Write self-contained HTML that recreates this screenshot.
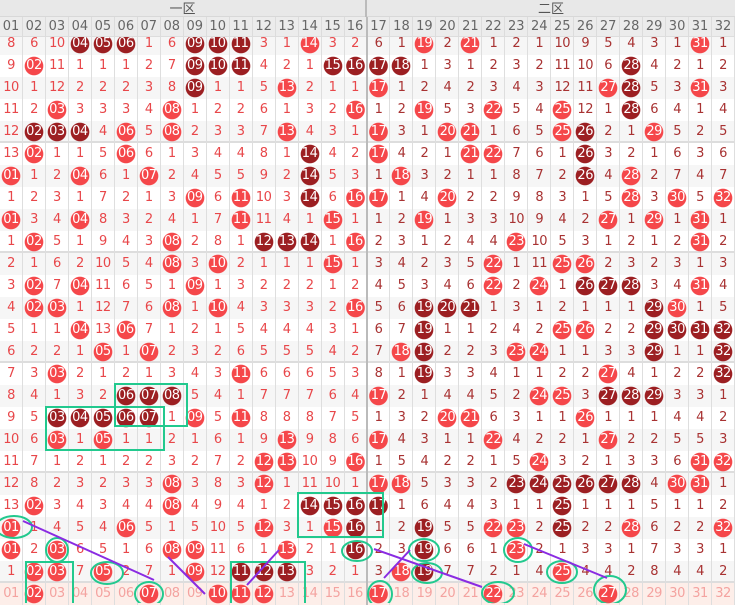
<!DOCTYPE html><html><head><meta charset="utf-8"><style>
*{margin:0;padding:0;box-sizing:border-box}
body{width:735px;height:603px;overflow:hidden;background:#fff;font-family:"DejaVu Sans","Liberation Sans",sans-serif;position:relative}
.h0{position:absolute;top:0;left:0;width:735px;height:17px;background:#e8e8e8;border-bottom:1px solid #d8d8d8;display:grid;grid-template-columns:367px 368px;font-family:"Liberation Sans","Noto Sans CJK SC",sans-serif;font-size:13px;color:#555;z-index:3}
.h0 div{text-align:center;line-height:17px}
.h0 div:first-child{border-right:2px solid #bbb}
.h1{position:absolute;top:17px;left:0;width:735px;height:20px;background:#ececec;z-index:3;display:grid;grid-template-columns:repeat(32,1fr);font-size:13px;color:#666;border-bottom:1px solid #ddd}
.h1 span{text-align:center;line-height:20px;border-right:1px solid #dcdcdc}
.h1 span:nth-child(16){border-right:2px solid #bbb}
.rows{position:absolute;top:33px;left:0;width:735px}
.r{display:grid;grid-template-columns:repeat(32,1fr);height:22px;font-size:13px}
.r:nth-child(odd){background:#f6f6f6}
.r:nth-child(5n){border-bottom:2px solid #ddd;height:22px}
.r>*{font-style:normal;font-weight:normal;text-decoration:none;text-align:center;line-height:22px;border-right:1px solid #dedede;color:#e8474a;letter-spacing:-0.5px}
.r>*:nth-child(16){border-right:2px solid #bbb}
.r>*:nth-child(n+17){color:#a83232}
.r>b{color:#fff!important;background:radial-gradient(circle at 50% 50%,#f5474a 9px,transparent 9.6px)}
.r>u{color:#fff!important;background:radial-gradient(circle at 50% 50%,#9c1f22 9px,transparent 9.6px)}
.r.f{background:#fdeee9}
.r.f>i{color:#f4a3a0}
svg{position:absolute;left:0;top:0;z-index:4}
</style></head><body>
<div class="h0"><div>一区</div><div>二区</div></div>
<div class="h1"><span>01</span><span>02</span><span>03</span><span>04</span><span>05</span><span>06</span><span>07</span><span>08</span><span>09</span><span>10</span><span>11</span><span>12</span><span>13</span><span>14</span><span>15</span><span>16</span><span>17</span><span>18</span><span>19</span><span>20</span><span>21</span><span>22</span><span>23</span><span>24</span><span>25</span><span>26</span><span>27</span><span>28</span><span>29</span><span>30</span><span>31</span><span>32</span></div>
<div class="rows">
<div class="r"><i>8</i><i>6</i><i>10</i><u>04</u><u>05</u><u>06</u><i>1</i><i>6</i><u>09</u><u>10</u><u>11</u><i>3</i><i>1</i><b>14</b><i>3</i><i>2</i><i>6</i><i>1</i><b>19</b><i>2</i><b>21</b><i>1</i><i>2</i><i>1</i><i>10</i><i>9</i><i>5</i><i>4</i><i>3</i><i>1</i><b>31</b><i>1</i></div>
<div class="r"><i>9</i><b>02</b><i>11</i><i>1</i><i>1</i><i>1</i><i>2</i><i>7</i><u>09</u><u>10</u><u>11</u><i>4</i><i>2</i><i>1</i><u>15</u><u>16</u><u>17</u><u>18</u><i>1</i><i>3</i><i>1</i><i>2</i><i>3</i><i>2</i><i>11</i><i>10</i><i>6</i><u>28</u><i>4</i><i>2</i><i>1</i><i>2</i></div>
<div class="r"><i>10</i><i>1</i><i>12</i><i>2</i><i>2</i><i>2</i><i>3</i><i>8</i><u>09</u><i>1</i><i>1</i><i>5</i><b>13</b><i>2</i><i>1</i><i>1</i><b>17</b><i>1</i><i>2</i><i>4</i><i>2</i><i>3</i><i>4</i><i>3</i><i>12</i><i>11</i><b>27</b><u>28</u><i>5</i><i>3</i><b>31</b><i>3</i></div>
<div class="r"><i>11</i><i>2</i><b>03</b><i>3</i><i>3</i><i>3</i><i>4</i><b>08</b><i>1</i><i>2</i><i>2</i><i>6</i><i>1</i><i>3</i><i>2</i><b>16</b><i>1</i><i>2</i><b>19</b><i>5</i><i>3</i><b>22</b><i>5</i><i>4</i><b>25</b><i>12</i><i>1</i><u>28</u><i>6</i><i>4</i><i>1</i><i>4</i></div>
<div class="r"><i>12</i><u>02</u><u>03</u><u>04</u><i>4</i><b>06</b><i>5</i><b>08</b><i>2</i><i>3</i><i>3</i><i>7</i><b>13</b><i>4</i><i>3</i><i>1</i><b>17</b><i>3</i><i>1</i><b>20</b><b>21</b><i>1</i><i>6</i><i>5</i><b>25</b><u>26</u><i>2</i><i>1</i><b>29</b><i>5</i><i>2</i><i>5</i></div>
<div class="r"><i>13</i><b>02</b><i>1</i><i>1</i><i>5</i><b>06</b><i>6</i><i>1</i><i>3</i><i>4</i><i>4</i><i>8</i><i>1</i><u>14</u><i>4</i><i>2</i><b>17</b><i>4</i><i>2</i><i>1</i><b>21</b><b>22</b><i>7</i><i>6</i><i>1</i><u>26</u><i>3</i><i>2</i><i>1</i><i>6</i><i>3</i><i>6</i></div>
<div class="r"><b>01</b><i>1</i><i>2</i><b>04</b><i>6</i><i>1</i><b>07</b><i>2</i><i>4</i><i>5</i><i>5</i><i>9</i><i>2</i><u>14</u><i>5</i><i>3</i><i>1</i><b>18</b><i>3</i><i>2</i><i>1</i><i>1</i><i>8</i><i>7</i><i>2</i><u>26</u><i>4</i><b>28</b><i>2</i><i>7</i><i>4</i><i>7</i></div>
<div class="r"><i>1</i><i>2</i><i>3</i><i>1</i><i>7</i><i>2</i><i>1</i><i>3</i><b>09</b><i>6</i><b>11</b><i>10</i><i>3</i><u>14</u><i>6</i><b>16</b><b>17</b><i>1</i><i>4</i><b>20</b><i>2</i><i>2</i><i>9</i><i>8</i><i>3</i><i>1</i><i>5</i><b>28</b><i>3</i><b>30</b><i>5</i><b>32</b></div>
<div class="r"><b>01</b><i>3</i><i>4</i><b>04</b><i>8</i><i>3</i><i>2</i><i>4</i><i>1</i><i>7</i><b>11</b><i>11</i><i>4</i><i>1</i><b>15</b><i>1</i><i>1</i><i>2</i><b>19</b><i>1</i><i>3</i><i>3</i><i>10</i><i>9</i><i>4</i><i>2</i><b>27</b><i>1</i><b>29</b><i>1</i><b>31</b><i>1</i></div>
<div class="r"><i>1</i><b>02</b><i>5</i><i>1</i><i>9</i><i>4</i><i>3</i><b>08</b><i>2</i><i>8</i><i>1</i><u>12</u><u>13</u><u>14</u><i>1</i><b>16</b><i>2</i><i>3</i><i>1</i><i>2</i><i>4</i><i>4</i><b>23</b><i>10</i><i>5</i><i>3</i><i>1</i><i>2</i><i>1</i><i>2</i><b>31</b><i>2</i></div>
<div class="r"><i>2</i><i>1</i><i>6</i><i>2</i><i>10</i><i>5</i><i>4</i><b>08</b><i>3</i><b>10</b><i>2</i><i>1</i><i>1</i><i>1</i><b>15</b><i>1</i><i>3</i><i>4</i><i>2</i><i>3</i><i>5</i><b>22</b><i>1</i><i>11</i><b>25</b><b>26</b><i>2</i><i>3</i><i>2</i><i>3</i><i>1</i><i>3</i></div>
<div class="r"><i>3</i><b>02</b><i>7</i><b>04</b><i>11</i><i>6</i><i>5</i><i>1</i><b>09</b><i>1</i><i>3</i><i>2</i><i>2</i><i>2</i><i>1</i><i>2</i><i>4</i><i>5</i><i>3</i><i>4</i><i>6</i><b>22</b><i>2</i><b>24</b><i>1</i><u>26</u><u>27</u><u>28</u><i>3</i><i>4</i><b>31</b><i>4</i></div>
<div class="r"><i>4</i><b>02</b><b>03</b><i>1</i><i>12</i><i>7</i><i>6</i><b>08</b><i>1</i><b>10</b><i>4</i><i>3</i><i>3</i><i>3</i><i>2</i><b>16</b><i>5</i><i>6</i><u>19</u><u>20</u><u>21</u><i>1</i><i>3</i><i>1</i><i>2</i><i>1</i><i>1</i><i>1</i><u>29</u><b>30</b><i>1</i><i>5</i></div>
<div class="r"><i>5</i><i>1</i><i>1</i><b>04</b><i>13</i><b>06</b><i>7</i><i>1</i><i>2</i><i>1</i><i>5</i><i>4</i><i>4</i><i>4</i><i>3</i><i>1</i><i>6</i><i>7</i><u>19</u><i>1</i><i>1</i><i>2</i><i>4</i><i>2</i><b>25</b><b>26</b><i>2</i><i>2</i><u>29</u><u>30</u><u>31</u><u>32</u></div>
<div class="r"><i>6</i><i>2</i><i>2</i><i>1</i><b>05</b><i>1</i><b>07</b><i>2</i><i>3</i><i>2</i><i>6</i><i>5</i><i>5</i><i>5</i><i>4</i><i>2</i><i>7</i><b>18</b><u>19</u><i>2</i><i>2</i><i>3</i><b>23</b><b>24</b><i>1</i><i>1</i><i>3</i><i>3</i><u>29</u><i>1</i><i>1</i><u>32</u></div>
<div class="r"><i>7</i><i>3</i><b>03</b><i>2</i><i>1</i><i>2</i><i>1</i><i>3</i><i>4</i><i>3</i><b>11</b><i>6</i><i>6</i><i>6</i><i>5</i><i>3</i><i>8</i><i>1</i><u>19</u><i>3</i><i>3</i><i>4</i><i>1</i><i>1</i><i>2</i><i>2</i><b>27</b><i>4</i><i>1</i><i>2</i><i>2</i><u>32</u></div>
<div class="r"><i>8</i><i>4</i><i>1</i><i>3</i><i>2</i><u>06</u><u>07</u><u>08</u><i>5</i><i>4</i><i>1</i><i>7</i><i>7</i><i>7</i><i>6</i><i>4</i><b>17</b><i>2</i><i>1</i><i>4</i><i>4</i><i>5</i><i>2</i><b>24</b><b>25</b><i>3</i><u>27</u><u>28</u><u>29</u><i>3</i><i>3</i><i>1</i></div>
<div class="r"><i>9</i><i>5</i><u>03</u><u>04</u><u>05</u><u>06</u><u>07</u><i>1</i><b>09</b><i>5</i><b>11</b><i>8</i><i>8</i><i>8</i><i>7</i><i>5</i><i>1</i><i>3</i><i>2</i><b>20</b><b>21</b><i>6</i><i>3</i><i>1</i><i>1</i><b>26</b><i>1</i><i>1</i><i>1</i><i>4</i><i>4</i><i>2</i></div>
<div class="r"><i>10</i><i>6</i><b>03</b><i>1</i><b>05</b><i>1</i><i>1</i><i>2</i><i>1</i><i>6</i><i>1</i><i>9</i><b>13</b><i>9</i><i>8</i><i>6</i><b>17</b><i>4</i><i>3</i><i>1</i><i>1</i><b>22</b><i>4</i><i>2</i><i>2</i><i>1</i><b>27</b><i>2</i><i>2</i><i>5</i><i>5</i><i>3</i></div>
<div class="r"><i>11</i><i>7</i><i>1</i><i>2</i><i>1</i><i>2</i><i>2</i><i>3</i><i>2</i><i>7</i><i>2</i><b>12</b><b>13</b><i>10</i><i>9</i><b>16</b><i>1</i><i>5</i><i>4</i><i>2</i><i>2</i><i>1</i><i>5</i><b>24</b><i>3</i><i>2</i><i>1</i><i>3</i><i>3</i><i>6</i><b>31</b><b>32</b></div>
<div class="r"><i>12</i><i>8</i><i>2</i><i>3</i><i>2</i><i>3</i><i>3</i><b>08</b><i>3</i><i>8</i><i>3</i><b>12</b><i>1</i><i>11</i><i>10</i><i>1</i><b>17</b><b>18</b><i>5</i><i>3</i><i>3</i><i>2</i><u>23</u><u>24</u><u>25</u><u>26</u><u>27</u><u>28</u><i>4</i><b>30</b><b>31</b><i>1</i></div>
<div class="r"><i>13</i><b>02</b><i>3</i><i>4</i><i>3</i><i>4</i><i>4</i><b>08</b><i>4</i><i>9</i><i>4</i><i>1</i><i>2</i><u>14</u><u>15</u><u>16</u><u>17</u><i>1</i><i>6</i><i>4</i><i>4</i><i>3</i><i>1</i><i>1</i><u>25</u><i>1</i><i>1</i><i>1</i><i>5</i><i>1</i><i>1</i><i>2</i></div>
<div class="r"><b>01</b><i>1</i><i>4</i><i>5</i><i>4</i><b>06</b><i>5</i><i>1</i><i>5</i><i>10</i><i>5</i><b>12</b><i>3</i><i>1</i><b>15</b><u>16</u><i>1</i><i>2</i><u>19</u><i>5</i><i>5</i><b>22</b><b>23</b><i>2</i><u>25</u><i>2</i><i>2</i><b>28</b><i>6</i><i>2</i><i>2</i><b>32</b></div>
<div class="r"><b>01</b><i>2</i><b>03</b><i>6</i><i>5</i><i>1</i><i>6</i><b>08</b><b>09</b><i>11</i><i>6</i><i>1</i><b>13</b><i>2</i><i>1</i><u>16</u><i>2</i><i>3</i><u>19</u><i>6</i><i>6</i><i>1</i><b>23</b><i>2</i><i>1</i><i>3</i><i>3</i><i>1</i><i>7</i><i>3</i><i>3</i><i>1</i></div>
<div class="r"><i>1</i><b>02</b><b>03</b><i>7</i><b>05</b><i>2</i><i>7</i><i>1</i><b>09</b><i>12</i><u>11</u><u>12</u><u>13</u><i>3</i><i>2</i><i>1</i><i>3</i><b>18</b><u>19</u><i>7</i><i>7</i><i>2</i><i>1</i><i>4</i><b>25</b><i>4</i><i>4</i><i>2</i><i>8</i><i>4</i><i>4</i><i>2</i></div>
<div class="r f"><i>01</i><b>02</b><i>03</i><i>04</i><i>05</i><i>06</i><b>07</b><i>08</i><i>09</i><b>10</b><b>11</b><b>12</b><i>13</i><i>14</i><i>15</i><i>16</i><b>17</b><i>18</i><i>19</i><i>20</i><i>21</i><b>22</b><i>23</i><i>24</i><i>25</i><i>26</i><b>27</b><i>28</i><i>29</i><i>30</i><i>31</i><i>32</i></div>
</div>
<svg width="735" height="603" viewBox="0 0 735 603">
<g fill="none" stroke="#22c98e" stroke-width="2">
<rect x="115" y="384" width="72" height="42"/>
<rect x="46" y="407" width="118" height="43"/>
<rect x="298" y="493" width="85" height="44"/>
<rect x="26" y="562" width="47" height="44"/>
<rect x="231" y="562" width="74" height="44"/>
<ellipse cx="14" cy="527" rx="18" ry="11"/>
<ellipse cx="57" cy="550" rx="11" ry="12"/>
<ellipse cx="107" cy="573" rx="16" ry="11"/>
<ellipse cx="149" cy="594" rx="14" ry="12"/>
<ellipse cx="357" cy="551" rx="15" ry="10"/>
<ellipse cx="424" cy="550" rx="15" ry="11"/>
<ellipse cx="427" cy="573" rx="15" ry="10"/>
<ellipse cx="380" cy="594" rx="12" ry="13"/>
<ellipse cx="498" cy="593" rx="16" ry="11"/>
<ellipse cx="518" cy="550" rx="14" ry="12"/>
<ellipse cx="562" cy="572" rx="15" ry="11"/>
<ellipse cx="610" cy="590" rx="16" ry="14"/>
</g>
<g stroke="#8a2be2" stroke-width="2">
<line x1="23" y1="521" x2="154" y2="580"/>
<line x1="168" y1="557" x2="205" y2="594"/>
<line x1="247" y1="585" x2="279" y2="550"/>
<line x1="374" y1="549" x2="482" y2="587"/>
<line x1="384" y1="578" x2="410" y2="550"/>
<line x1="524" y1="544" x2="607" y2="578"/>
</g>
</svg>
</body></html>
